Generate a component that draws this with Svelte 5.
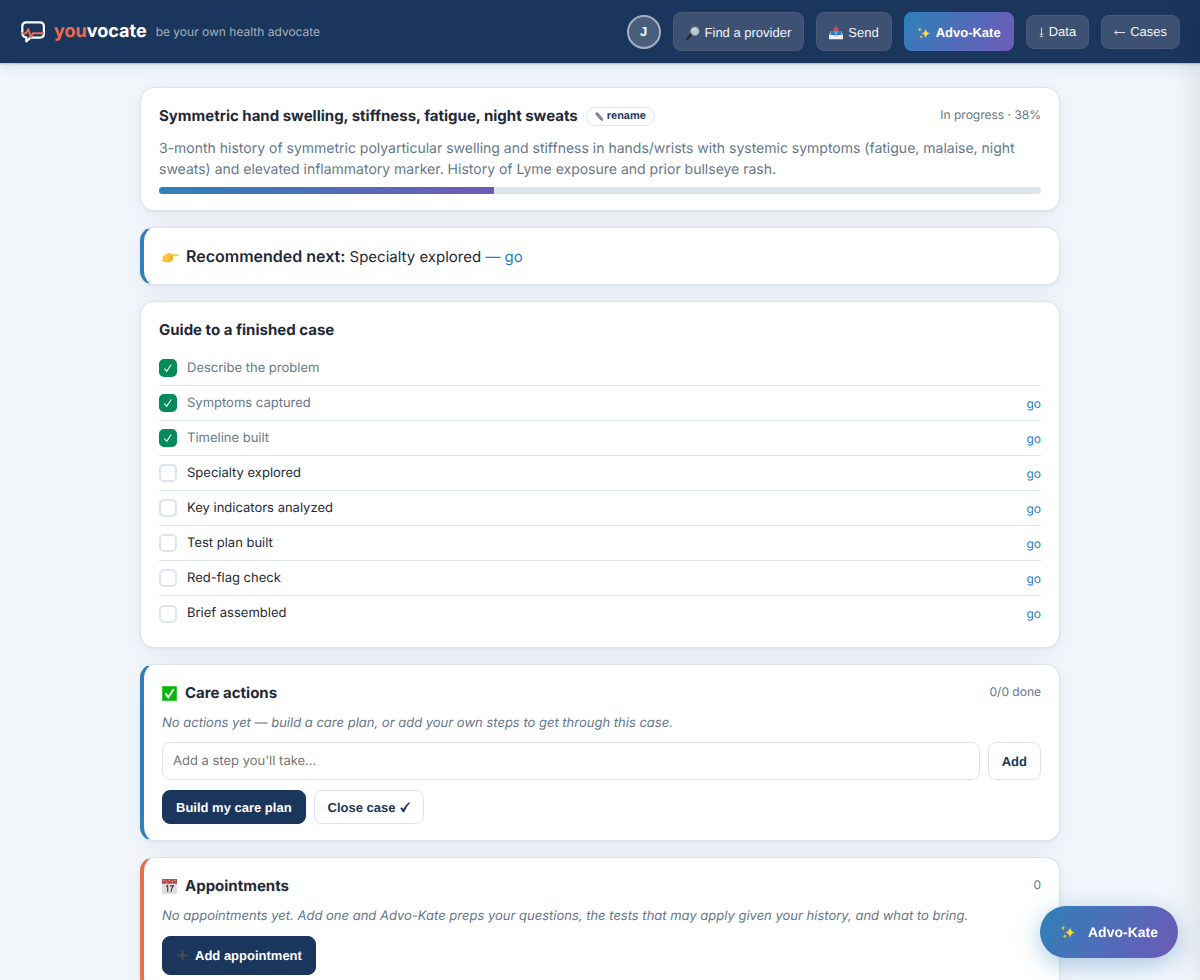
<script>
  const progress = 38;
  const steps = $state([
    { label: 'Describe the problem', done: true, link: false },
    { label: 'Symptoms captured', done: true, link: true },
    { label: 'Timeline built', done: true, link: true },
    { label: 'Specialty explored', done: false, link: true },
    { label: 'Key indicators analyzed', done: false, link: true },
    { label: 'Test plan built', done: false, link: true },
    { label: 'Red-flag check', done: false, link: true },
    { label: 'Brief assembled', done: false, link: true }
  ]);
  let draft = $state('');
</script>

{#snippet sparkles(size)}
  <svg class="icon" width={size} height={size} viewBox="0 0 16 16" aria-hidden="true">
    <path fill="#fdd835" d="M10 3.2Q10.6 7.800 15 8.500Q10.600 9.200 10 14Q9.400 9.200 5 8.500Q9.400 7.800 10 3.200Z" />
    <path fill="#f4b92f" d="M3.200 1.500Q3.500 3.700 5.600 4.100Q3.500 4.500 3.200 6.700Q2.900 4.500 .8 4.100Q2.900 3.700 3.200 1.500Z" />
    <path fill="#f4b92f" d="M4.800 10Q5.100 12 7 12.300Q5.100 12.600 4.800 14.600Q4.500 12.600 2.600 12.300Q4.500 12 4.800 10Z" />
  </svg>
{/snippet}

<header class="topbar">
  <a class="brand" href="#home">
    <svg width="26" height="24" viewBox="0 0 26 24" fill="none" aria-hidden="true">
      <path d="M2.300 13V6.500Q2.300 2.400 6.400 2.400H19.800Q23.900 2.400 23.900 6.500V13.500Q23.900 17.600 19.800 17.600H10.500L6.300 21.300V17.400Q2.300 17 2.300 13Z" stroke="#fff" stroke-width="2.200" stroke-linejoin="round" />
      <path d="M2 13.300H6L8.300 9.200L10.700 17.200L13 13.300H23" stroke="#ee6c4d" stroke-width="2" stroke-linecap="round" stroke-linejoin="round" />
    </svg>
    <span class="name"><span class="accent">you</span>vocate</span>
  </a>
  <span class="tagline">be your own health advocate</span>
  <nav class="actions" aria-label="Main">
    <button class="avatar" type="button" aria-label="Profile J">J</button>
    <button class="nav-btn tall" type="button">
      <svg class="icon" width="14" height="14" viewBox="0 0 14 14" aria-hidden="true">
        <path d="M1.300 12.700L5.500 8.300" stroke="#24282d" stroke-width="2.300" stroke-linecap="round" />
        <circle cx="8.900" cy="5.200" r="4.200" fill="#b9cbd8" stroke="#8f9ba3" stroke-width="1" />
        <path d="M6.500 4.700Q7.300 2.500 9.400 2.500" stroke="#e9f2f7" fill="none" />
      </svg>
      Find a provider
    </button>
    <button class="nav-btn tall" type="button">
      <svg class="icon" width="14" height="14" viewBox="0 0 14 14" aria-hidden="true">
        <path d="M2 5H12L14 9V13H0V9Z" fill="#c3ccd2" />
        <path d="M2.400 5H11.600L12.600 9H1.400Z" fill="#2d74b8" />
        <path d="M0 9H4.200Q4.800 11 7 11T9.800 9H14V13.200H0Z" fill="#eef1f3" />
        <path d="M4 5H10L7 9.500Z" fill="#53a9e8" />
        <path d="M7 .3L10.200 3.700H8.500V5.500H5.500V3.700H3.800Z" fill="#e8484c" />
      </svg>
      Send
    </button>
    <button class="nav-btn tall kate" type="button">{@render sparkles(14)} Advo-Kate</button>
    <button class="nav-btn" type="button">
      <svg class="down" width="5" height="12" viewBox="0 0 5 12" fill="none" stroke="currentColor" stroke-width=".8" aria-hidden="true"><path d="M2.500 1.500V9M1 7.500L2.500 9.300L4 7.500M.8 10.600H4.200" /></svg>
      Data
    </button>
    <button class="nav-btn" type="button">
      <svg class="left" width="11" height="8" viewBox="0 0 11 8" fill="none" stroke="currentColor" stroke-width=".9" aria-hidden="true"><path d="M11 4.500H.8M3 2.300L.8 4.500L3 6.700" /></svg>
      Cases
    </button>
  </nav>
</header>

<main>
  <section class="card summary">
    <div class="row">
      <h2>Symmetric hand swelling, stiffness, fatigue, night sweats</h2>
      <button class="rename" type="button">
        <svg width="8" height="9" viewBox="0 0 8 9" aria-hidden="true">
          <path d="M.5 1.800L2.300 .5L7 5.800L7.500 8.500L5.200 7.400Z" fill="#a5b0c0" stroke="#1b365d" stroke-width=".6" />
          <path d="M1.400 1.200L6.200 6.600" stroke="#1b365d" stroke-width=".5" />
        </svg>
        rename
      </button>
      <span class="meta">In progress · {progress}%</span>
    </div>
    <p class="lead">3-month history of symmetric polyarticular swelling and stiffness in hands/wrists with systemic symptoms (fatigue, malaise, night sweats) and elevated inflammatory marker. History of Lyme exposure and prior bullseye rash.</p>
    <div class="bar" role="progressbar" aria-label="Case progress" aria-valuenow={progress} aria-valuemin="0" aria-valuemax="100">
      <div class="fill" style:width="{progress}%"></div>
    </div>
  </section>

  <section class="card blue next">
    <svg width="17" height="16" viewBox="0 0 17 16" aria-hidden="true">
      <path d="M.5 8L4 5Q6 3.600 8.500 4L10 5.200H15.500Q16.700 5.300 16.700 6.200T15.500 7.200H11L11.300 8.500Q11.500 12.500 8 12.800H4.500Q2.500 12.700 2 11.500H.5Z" fill="#fcc33c" />
      <path d="M10.800 7.300H7.500M11 9H7.800M10.500 10.800H7.500" stroke="#e49420" stroke-width=".7" />
      <path d="M.5 11.500H2Q2.500 12.700 4.500 12.800H8" stroke="#eca52a" fill="none" />
    </svg>
    <p><strong>Recommended next:</strong> Specialty explored <a href="#specialty">— go</a></p>
  </section>

  <section class="card guide">
    <h2>Guide to a finished case</h2>
    <ul>
      {#each steps as step, i}
        <li>
          <span class="tick">
            <input id="step-{i}" type="checkbox" bind:checked={step.done} />
            {#if step.done}
              <svg width="10" height="10" viewBox="0 0 10 10" aria-hidden="true"><path d="M1.400 5.500L3.700 8.300L8.300 1.500" fill="none" stroke="#fff" stroke-width="1.100" /></svg>
            {/if}
          </span>
          <label for="step-{i}" class:done={step.done}>{step.label}</label>
          {#if step.link}<a href="#step-{i}">go</a>{/if}
        </li>
      {/each}
    </ul>
  </section>

  <section class="card blue care">
    <div class="row">
      <svg width="15" height="15" viewBox="0 0 15 15" aria-hidden="true">
        <rect width="15" height="15" rx="1.500" fill="#08b50b" />
        <rect x=".5" y=".5" width="14" height="14" rx="1" fill="none" stroke="#36cb38" />
        <path d="M3.300 7.300L6.200 11.300L11.800 3" fill="none" stroke="#fff" stroke-width="1.900" />
      </svg>
      <h2>Care actions</h2>
      <span class="meta">0/0 done</span>
    </div>
    <p class="empty">No actions yet — build a care plan, or add your own steps to get through this case.</p>
    <form class="add" onsubmit={(e) => e.preventDefault()}>
      <input type="text" aria-label="Add a step" placeholder="Add a step you'll take…" bind:value={draft} />
      <button class="btn" type="submit">Add</button>
    </form>
    <div class="buttons">
      <button class="btn primary" type="button">Build my care plan</button>
      <button class="btn" type="button">
        Close case
        <svg class="heavy" width="10" height="11" viewBox="0 0 10 11" aria-hidden="true"><path d="M.4 6.300Q1.300 5.200 2.400 5.800L3.400 7.300Q5.700 2.400 9.300 .3L9.900 .9Q6.600 3.900 4.400 9.700Q3.400 10.400 2.400 9.700Q1.800 7.800 .4 6.300Z" fill="currentColor" stroke="currentColor" stroke-width=".2" /></svg>
      </button>
    </div>
  </section>

  <section class="card orange appts">
    <div class="row">
      <svg width="15" height="15" viewBox="0 0 15 15" aria-hidden="true">
        <rect width="15" height="15" rx="1" fill="#dedede" />
        <path d="M0 0H15V4.700H0Z" fill="#b8494c" />
        <path d="M1.500 1.400H2.500M4 2.800H5M7 1.400H8M10 2.800H11M12.500 1.400H13.500" stroke="#f2d9d9" />
        <path d="M4.300 7.500L5.700 6.500V13M8 6.900H11.300Q9.300 9.500 9 13" fill="none" stroke="#3a3a3a" stroke-width="1.100" />
      </svg>
      <h2>Appointments</h2>
      <span class="meta">0</span>
    </div>
    <p class="empty">No appointments yet. Add one and Advo-Kate preps your questions, the tests that may apply given your history, and what to bring.</p>
    <button class="btn primary big" type="button">
      <svg width="11" height="11" viewBox="0 0 11 11" aria-hidden="true"><path d="M5.500 .5V10.500M.5 5.500H10.500" stroke="#484b50" stroke-width="2.200" /></svg>
      Add appointment
    </button>
  </section>
</main>

<button class="fab" type="button">{@render sparkles(16)} Advo-Kate</button>
<aside class="drawer" aria-hidden="true"></aside>

<style>
  :global(body) {
    background: #f3f7fc;
    color: #1f2937;
    font-family: Inter, sans-serif;
    font-size: 14px;
    line-height: 21px;
    text-rendering: geometricPrecision;
    overflow-x: hidden;
  }
  h2, p, ul { margin: 0; padding: 0; }
  svg { display: block; flex: none; }
  a { color: #2b7fbf; text-decoration: none; }
  button { font-family: "Liberation Sans", Arial, sans-serif; cursor: pointer; margin: 0; }
  button, input { text-rendering: geometricPrecision; }

  .topbar {
    display: flex;
    align-items: center;
    box-sizing: border-box;
    min-height: 63px;
    padding: 12px 20px;
    background: #1b365d;
    box-shadow: 0 1px 2px rgba(27, 54, 93, 0.3), 0 4px 16px rgba(27, 54, 93, 0.1);
  }
  .brand { display: flex; align-items: center; gap: 8px; }
  .name { color: #fff; font-size: 18px; font-weight: 700; }
  .accent { color: #ee6c4d; }
  .tagline { margin-left: 9px; color: #a4afbe; font-size: 12px; }
  .actions { display: flex; align-items: center; gap: 12px; margin-left: auto; }
  .avatar {
    width: 34px;
    height: 34px;
    padding: 0;
    border: 2px solid #a4afbe;
    border-radius: 50%;
    background: #495e7d;
    color: #fff;
    font-size: 13px;
    font-weight: 700;
  }
  .nav-btn {
    display: flex;
    align-items: center;
    gap: 5px;
    height: 34px;
    padding: 0 12px;
    border: 1px solid #465a7a;
    border-radius: 8px;
    background: #3d5273;
    color: #f1f4f8;
    font-size: 13px;
  }
  .tall { height: 39px; padding-top: 2px; }
  .kate { border: 0; padding: 2px 13px 0; background: linear-gradient(120deg, #2f80b9, #6f5ab8); color: #fff; font-weight: 700; }

  main {
    display: flex;
    flex-direction: column;
    gap: 16px;
    box-sizing: border-box;
    max-width: 920px;
    margin: 24px auto;
  }
  .card {
    padding: 17px 18px 16px;
    border: 1px solid #dde4ed;
    border-radius: 14px;
    background: #fff;
    box-shadow: 0 1px 3px rgba(27, 54, 93, 0.06), 0 6px 24px rgba(27, 54, 93, 0.07);
  }
  .blue { border-left: 4px solid #2f80b9; }
  .orange { border-left: 4px solid #e76f51; }
  h2 { font-size: 15px; line-height: 22px; font-weight: 700; }
  .row { display: flex; align-items: center; gap: 8px; }
  .meta { align-self: flex-start; margin-left: auto; color: #667789; font-size: 12px; line-height: 20px; }
  .rename {
    display: flex;
    align-items: center;
    gap: 4px;
    height: 19px;
    padding: 0 8px;
    border: 1px solid #dde4ed;
    border-radius: 10px;
    background: #fff;
    color: #1b365d;
    font-size: 11px;
    font-weight: 700;
  }
  .lead { margin-top: 11px; color: #667789; }
  .bar { height: 7px; margin-top: 7px; border-radius: 4px; background: #dde4ed; overflow: hidden; }
  .fill { height: 100%; background: linear-gradient(90deg, #2f80b9, #6f5ab8); }

  .next { display: flex; align-items: center; gap: 7px; font-size: 15px; line-height: 24px; padding-top: 16px; padding-bottom: 15px; }
  .next strong { font-size: 16px; font-weight: 600; }

  ul { margin-top: 10px; list-style: none; }
  li {
    display: flex;
    align-items: center;
    gap: 10px;
    box-sizing: border-box;
    min-height: 35px;
    border-bottom: 1px solid #dde4ed;
  }
  li:last-child { border-bottom: 0; }
  li a { margin-left: auto; font-size: 12px; }
  label { font-size: 13px; }
  label.done { color: #667789; }
  .tick { display: grid; place-items: center; }
  .tick input, .tick svg { grid-area: 1 / 1; }
  .tick svg { pointer-events: none; }
  .tick input {
    appearance: none;
    box-sizing: border-box;
    width: 18px;
    height: 18px;
    margin: 0;
    border: 2px solid #dde4ed;
    border-radius: 5px;
    background: #fff;
  }
  .tick input:checked { border-color: #048a5b; background: #048a5b; }

  .empty { margin-top: 9px; color: #667789; font-size: 13px; font-style: italic; }
  .add { display: flex; gap: 8px; margin-top: 8px; }
  .add input {
    flex: 1;
    min-width: 0;
    padding: 8px 10px;
    border: 1px solid #dde4ed;
    border-radius: 8px;
    font: 13px/20px Inter, sans-serif;
    color: inherit;
  }
  .add input::placeholder { color: #757575; }
  .buttons { display: flex; gap: 8px; margin-top: 10px; }
  .btn {
    display: flex;
    align-items: center;
    gap: 4px;
    min-height: 34px;
    padding: 0 13px;
    border: 1px solid #dde4ed;
    border-radius: 8px;
    background: #fff;
    color: #1b365d;
    font-size: 13px;
    font-weight: 700;
  }
  .primary { border-color: #1b365d; background: #1b365d; color: #fff; }
  .big { min-height: 39px; margin-top: 9px; gap: 7px; padding: 0 13px 0 14px; }

  .fab {
    position: fixed;
    right: 22px;
    bottom: 22px;
    display: flex;
    align-items: center;
    gap: 12px;
    height: 52px;
    padding: 0 20px;
    border: 0;
    border-radius: 26px;
    background: linear-gradient(120deg, #2f80b9, #6f5ab8);
    box-shadow: 0 6px 24px rgba(47, 128, 185, 0.4);
    color: #fff;
    font-size: 14px;
    font-weight: 700;
  }
  .drawer {
    position: fixed;
    top: 0;
    bottom: 0;
    left: 100%;
    width: 400px;
    box-shadow: -4px 0 32px rgba(0, 0, 0, 0.1);
    pointer-events: none;
  }
</style>
